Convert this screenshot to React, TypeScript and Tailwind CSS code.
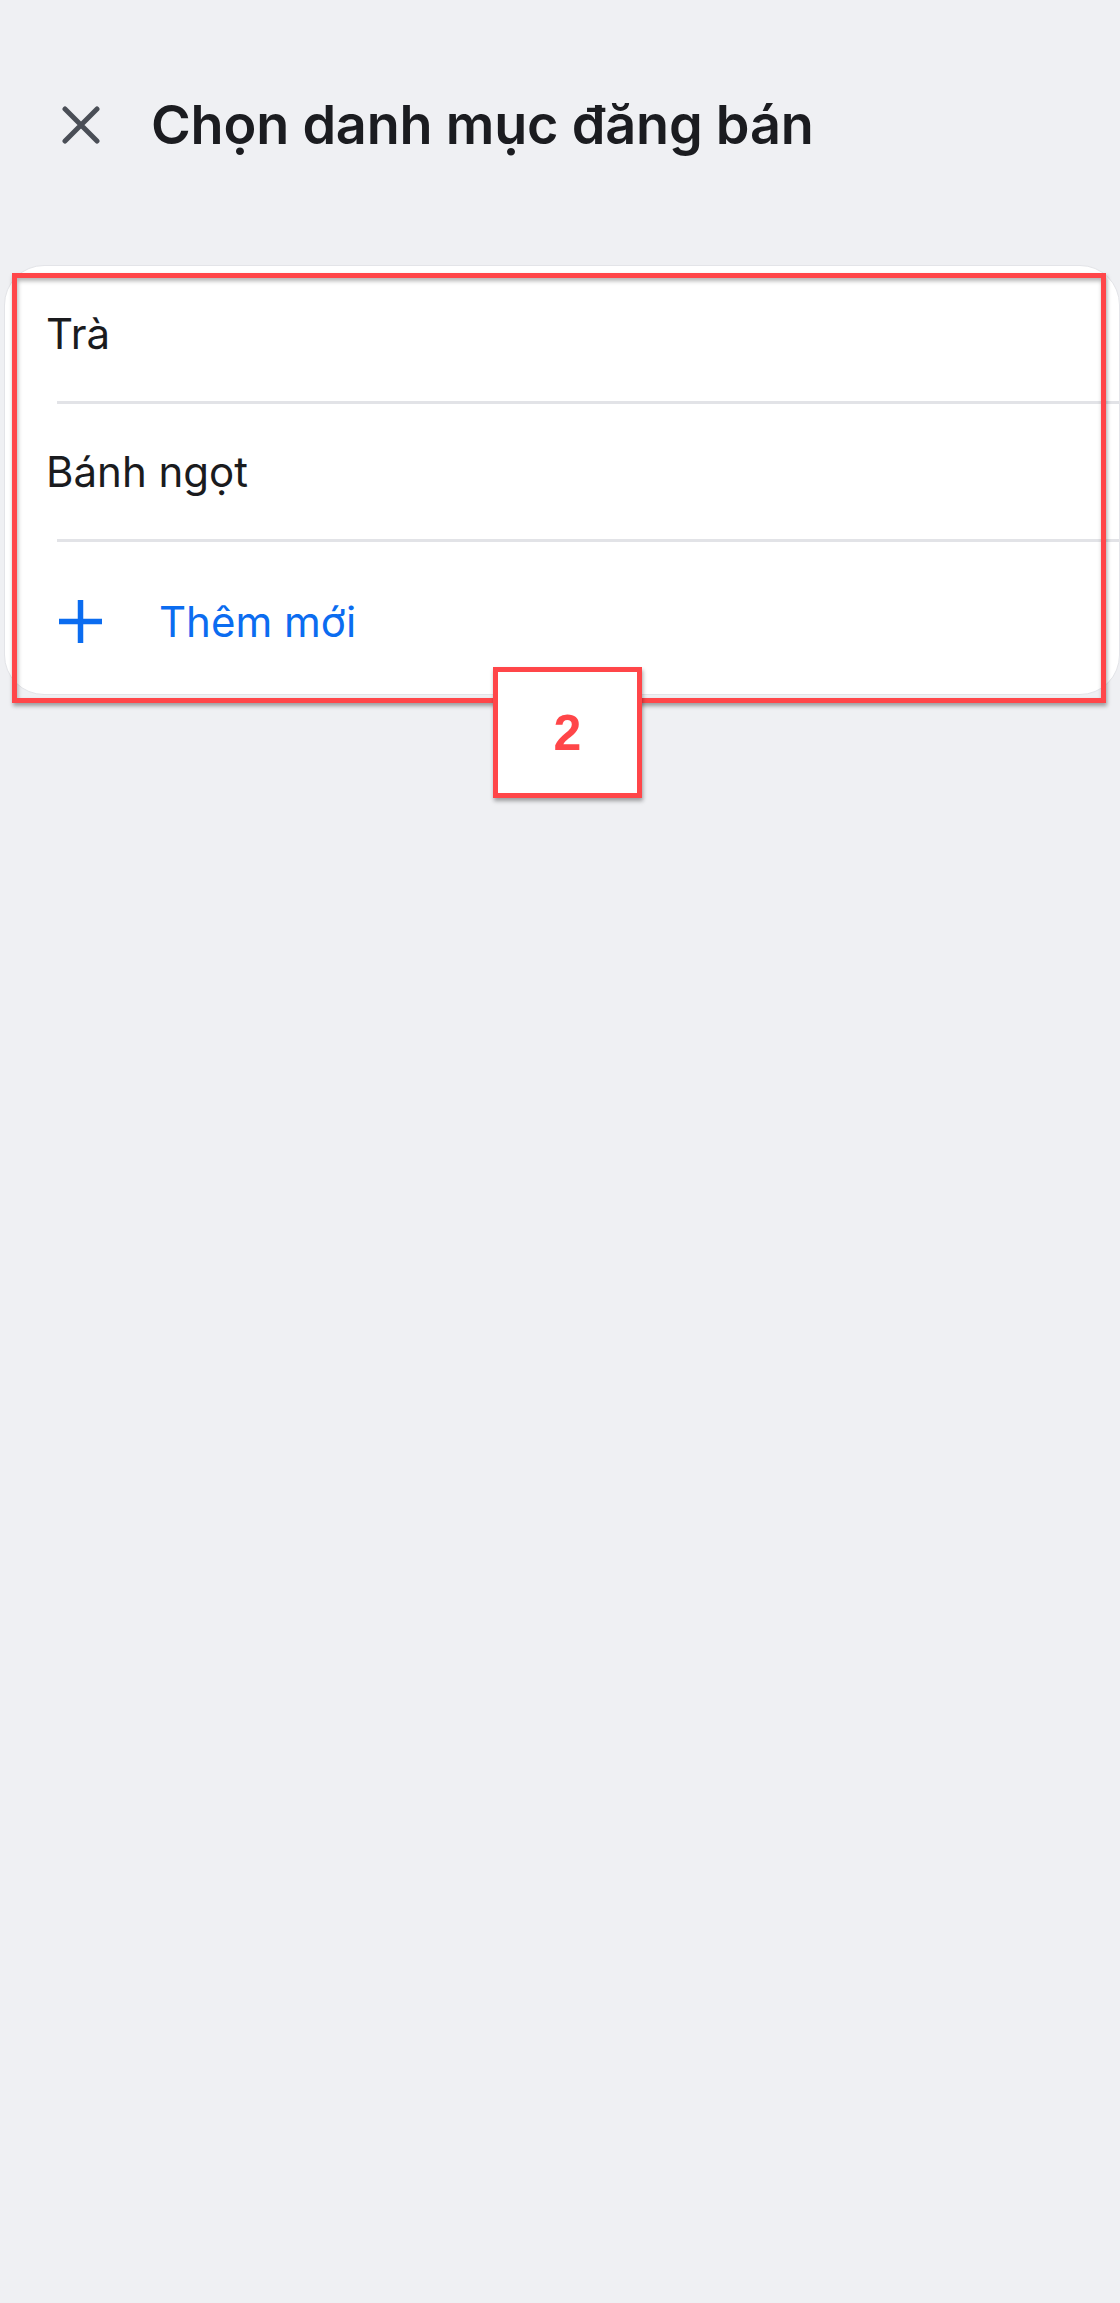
import React from "react";

function CloseIcon() {
  return (
    <svg width="38" height="38" viewBox="0 0 38 38" fill="none">
      <path d="M3 3L35 35M35 3L3 35" stroke="#4a4e56" strokeWidth="5" strokeLinecap="round" />
    </svg>
  );
}

function PlusIcon() {
  return (
    <svg width="43" height="43" viewBox="0 0 43 43" fill="none">
      <path d="M21.5 0V43M0 21.5H43" stroke="#0b6cf0" strokeWidth="5.5" />
    </svg>
  );
}

export default function App() {
  return (
    <div className="relative min-h-[2303px] w-full bg-[#eff0f3] font-['Inter',sans-serif]">
      <header className="flex h-[76px] items-center pl-[62px] pt-[87px] box-content">
        <CloseIcon />
        <h1 className="ml-[51px] text-[54px] font-semibold leading-none tracking-[-0.2px] text-[#1b1c20]">
          Chọn danh mục đăng bán
        </h1>
      </header>

      <div className="ml-[4px] mr-0 mt-[102px] overflow-hidden rounded-[40px] border border-[#e3e4e8] bg-white">
        <div className="flex h-[135px] items-center pl-[41px] text-[42px] leading-none text-[#1a1b1e]">Trà</div>
        <div className="ml-[52px] h-[3px] bg-[#e2e3e7]" />
        <div className="flex h-[135px] items-center pl-[41px] text-[42px] leading-none text-[#1a1b1e]">Bánh ngọt</div>
        <div className="ml-[52px] h-[3px] bg-[#e2e3e7]" />
        <div className="flex h-[152px] items-center pl-[54px] pt-[7px]">
          <PlusIcon />
          <span className="ml-[57px] text-[42px] leading-none text-[#0b6cf0]">Thêm mới</span>
        </div>
      </div>

      <div className="pointer-events-none absolute left-[12px] top-[273px] h-[430px] w-[1094px] border-[5px] border-[#ff4649] shadow-[1px_3px_4px_rgba(0,0,0,0.35),inset_1px_3px_4px_rgba(0,0,0,0.3)]" />

      <div className="absolute left-[493px] top-[667px] flex h-[131px] w-[149px] items-center justify-center border-[5px] border-[#ff4649] bg-white shadow-[1px_3px_4px_rgba(0,0,0,0.35)]">
        <span className="font-['Liberation_Sans',sans-serif] text-[50px] font-bold leading-none text-[#ff4649]">2</span>
      </div>
    </div>
  );
}
